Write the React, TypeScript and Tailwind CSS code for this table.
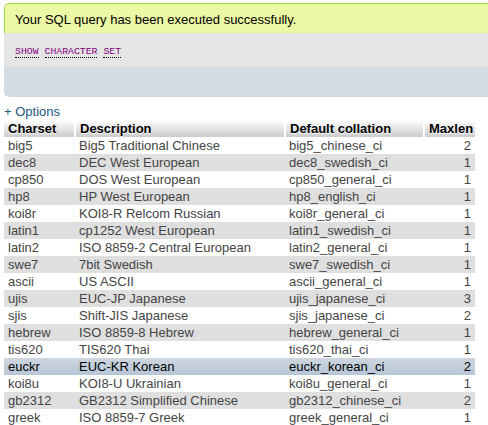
import React from "react";

const rows: [string, string, string, number][] = [
  ["big5", "Big5 Traditional Chinese", "big5_chinese_ci", 2],
  ["dec8", "DEC West European", "dec8_swedish_ci", 1],
  ["cp850", "DOS West European", "cp850_general_ci", 1],
  ["hp8", "HP West European", "hp8_english_ci", 1],
  ["koi8r", "KOI8-R Relcom Russian", "koi8r_general_ci", 1],
  ["latin1", "cp1252 West European", "latin1_swedish_ci", 1],
  ["latin2", "ISO 8859-2 Central European", "latin2_general_ci", 1],
  ["swe7", "7bit Swedish", "swe7_swedish_ci", 1],
  ["ascii", "US ASCII", "ascii_general_ci", 1],
  ["ujis", "EUC-JP Japanese", "ujis_japanese_ci", 3],
  ["sjis", "Shift-JIS Japanese", "sjis_japanese_ci", 2],
  ["hebrew", "ISO 8859-8 Hebrew", "hebrew_general_ci", 1],
  ["tis620", "TIS620 Thai", "tis620_thai_ci", 1],
  ["euckr", "EUC-KR Korean", "euckr_korean_ci", 2],
  ["koi8u", "KOI8-U Ukrainian", "koi8u_general_ci", 1],
  ["gb2312", "GB2312 Simplified Chinese", "gb2312_chinese_ci", 2],
  ["greek", "ISO 8859-7 Greek", "greek_general_ci", 1],
];

export default function App() {
  return (
    <div
      className="w-[488px] h-[425px] overflow-hidden bg-white text-[13px] text-[#444]"
      style={{ fontFamily: '"Liberation Sans", Arial, sans-serif' }}
    >
      <div className="pl-[4px] pt-[3px] w-[540px]">
        <div className="rounded-t-[5px] rounded-b-[5px] overflow-hidden">
          <div className="h-[30px] border-t border-l border-[#a2d246] bg-[#ebf8a4] rounded-tl-[5px] pl-[10px] pt-[3px] flex items-center text-[13px] text-black">
            Your SQL query has been executed successfully.
          </div>
          <div className="h-[34px] bg-[#e5e5e5] pl-[11px] pt-[3px] flex items-center">
            <span
              className="text-[9.8px] text-[#800080] flex gap-[6px]"
              style={{ fontFamily: '"Liberation Mono", "Courier New", monospace' }}
            >
              <span className="border-b border-dotted border-black leading-[11px]">SHOW</span>
              <span className="border-b border-dotted border-black leading-[11px]">CHARACTER</span>
              <span className="border-b border-dotted border-black leading-[11px]">SET</span>
            </span>
          </div>
          <div className="h-[30px] bg-[#d3dce3]" />
        </div>
        <div className="mt-[7px] text-[#235a81] leading-[16px] text-[13px]">+ Options</div>
        <table className="border-collapse w-[471px] table-fixed">
          <colgroup>
            <col className="w-[71px]" />
            <col className="w-[210px]" />
            <col className="w-[139px]" />
            <col className="w-[51px]" />
          </colgroup>
          <thead>
            <tr className="h-[17px]">
              {["Charset", "Description", "Default collation", "Maxlen"].map((h, i) => (
                <th
                  key={h}
                  className={`px-[4px] py-0 font-bold text-black leading-[17px] bg-gradient-to-b from-white to-[#cccccc] ${
                    i < 3 ? "border-r-2 border-white text-left" : "text-right"
                  }`}
                  style={{ textShadow: "0 1px 0 #fff" }}
                >
                  {h}
                </th>
              ))}
            </tr>
          </thead>
          <tbody>
            {rows.map((r, idx) => {
              const marked = r[0] === "euckr";
              const bg = marked
                ? "bg-gradient-to-b from-[#ced6df] to-[#b6c6d7] text-black"
                : idx % 2 === 0
                ? "bg-white"
                : "bg-[#dfdfdf]";
              return (
                <tr key={r[0]} className={`h-[17px] ${bg}`}>
                  <td className="px-[4px] py-0 leading-[17px] whitespace-nowrap">{r[0]}</td>
                  <td className="px-[4px] py-0 leading-[17px] whitespace-nowrap">{r[1]}</td>
                  <td className="px-[4px] py-0 leading-[17px] whitespace-nowrap">{r[2]}</td>
                  <td className="px-[4px] py-0 leading-[17px] text-right">{r[3]}</td>
                </tr>
              );
            })}
          </tbody>
        </table>
      </div>
    </div>
  );
}
